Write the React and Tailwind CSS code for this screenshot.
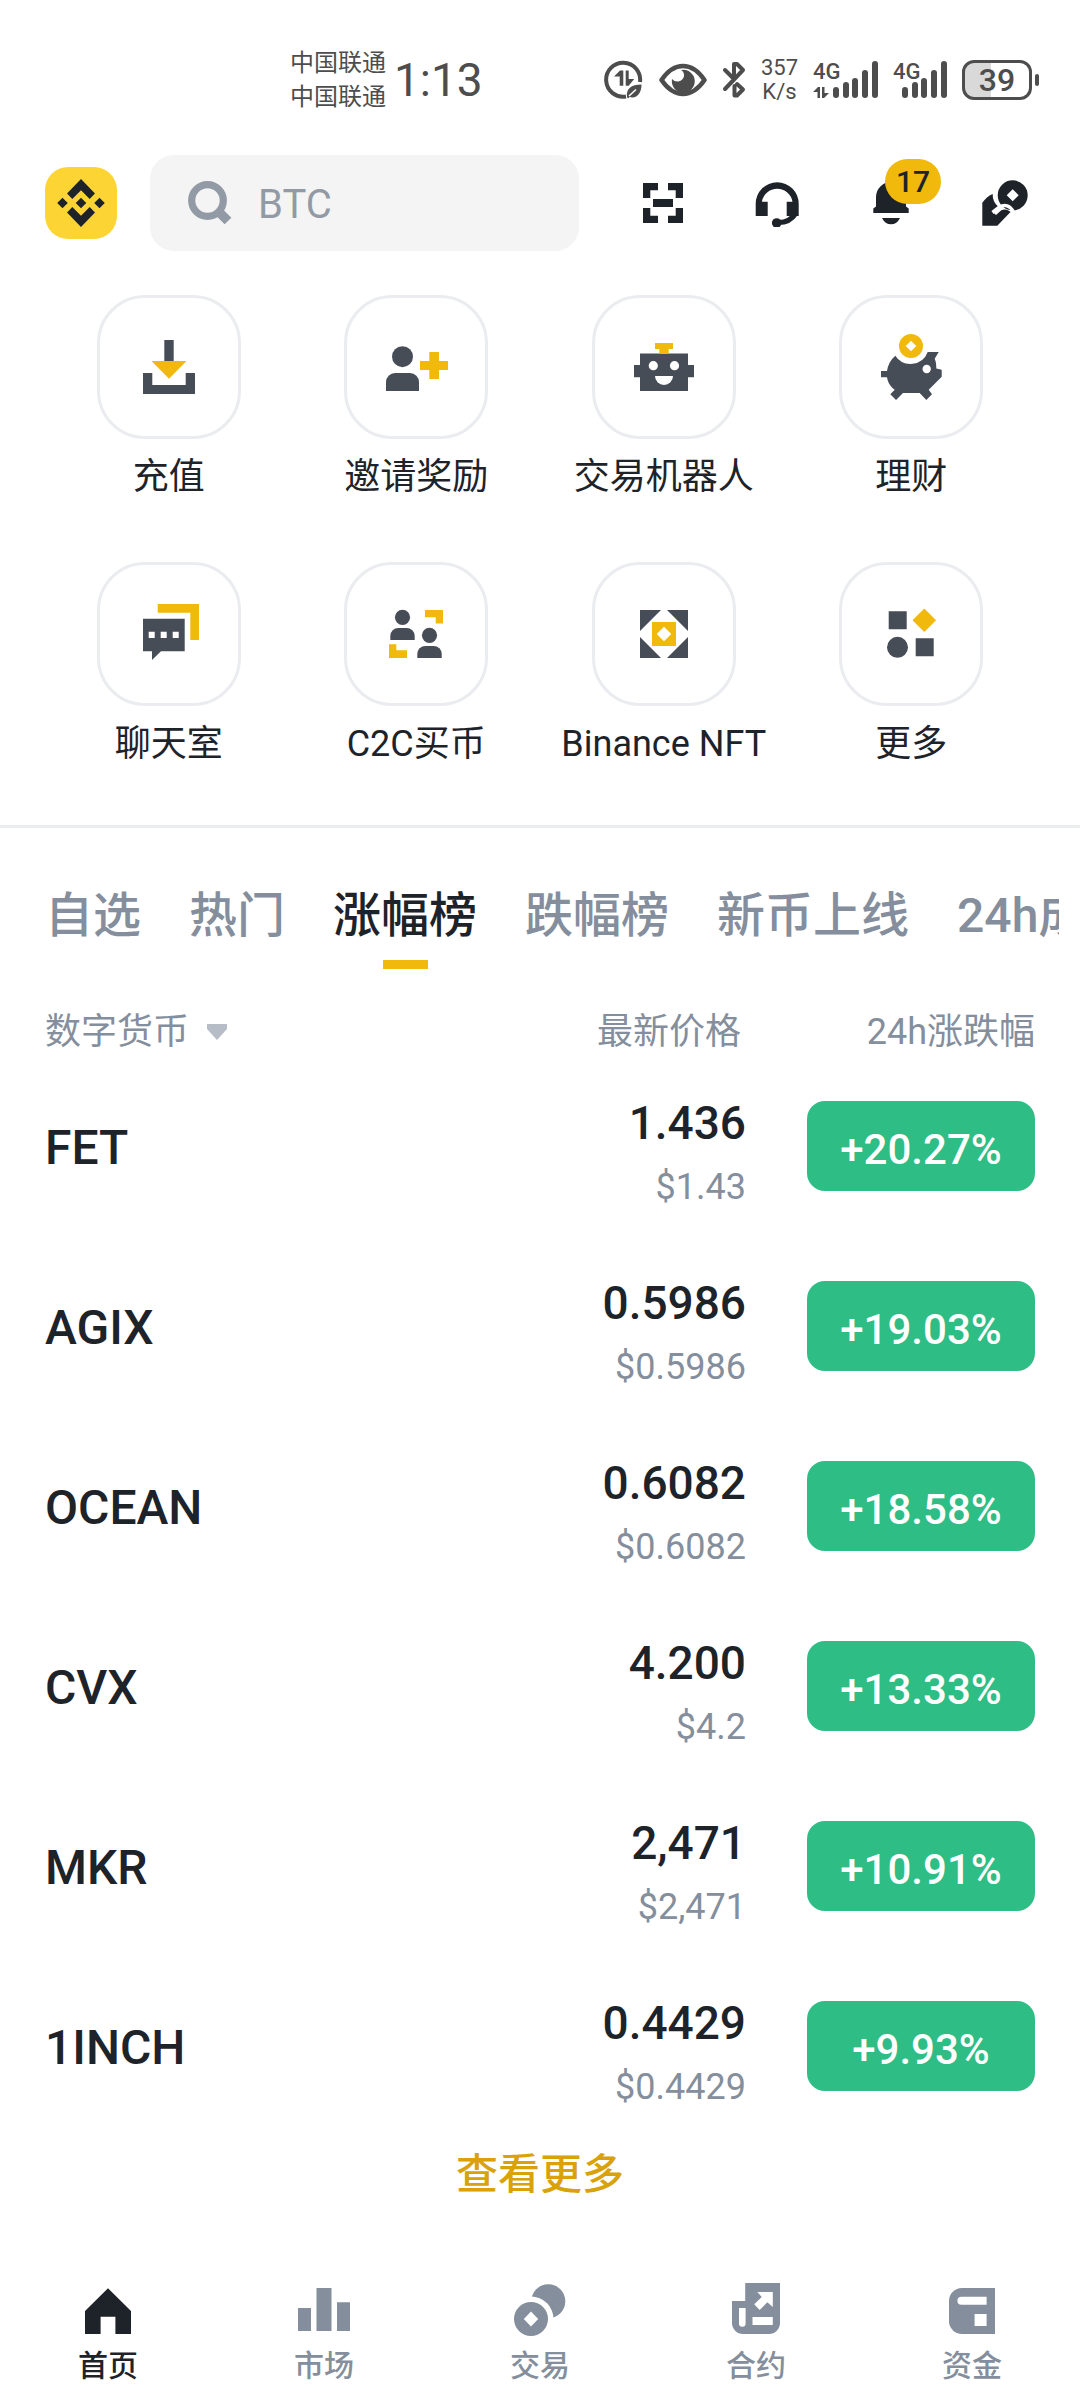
import React, { useState } from 'react';

const shortcuts = [
  {
    label: '充值',
    icon: (
      <>
        <path d="M31.3 9h9.4v22h-9.4z" fill="#474D57" />
        <path d="M10 42h9.3v12h33.4V42H62v21H10z" fill="#474D57" />
        <path d="M18.5 30h35L36 47.7z" fill="#F0B90B" />
      </>
    ),
  },
  {
    label: '邀请奖励',
    icon: (
      <>
        <circle cx="22.5" cy="25.7" r="10.5" fill="#474D57" />
        <path d="M6 60v-9a9 9 0 0 1 9-9h15a9 9 0 0 1 9 9v9z" fill="#474D57" />
        <path d="M49.3 21H59v9h9v9h-9v9h-9.700v-9H40v-9h9.300z" fill="#F0B90B" />
      </>
    ),
  },
  {
    label: '交易机器人',
    icon: (
      <>
        <path d="M12 22.5h48V34h6v12.3h-6V60H12V46.3H6V34h6z" fill="#474D57" />
        <path d="M27 12h18v6h-4.3v5h-9.4v-5H27z" fill="#F0B90B" />
        <circle cx="25.3" cy="34.7" r="4.6" fill="#fff" />
        <circle cx="46.5" cy="34.7" r="4.6" fill="#fff" />
        <path d="M27 45h18a9 9 0 0 1-18 0z" fill="#fff" />
      </>
    ),
  },
  {
    label: '理财',
    icon: (
      <>
        <path
          d="M20.3 24.7A18.3 18.3 0 0 0 52.7 21h11l-4 6.7c1.3 3 1.6 6 1.6 9.8l5.4 1.2v7l-13 13 3.3 4.6-5.7 5.7-6.6-7H28l-7 7-5.7-5.7 4.4-4.6C15 55.5 12.8 51 12 46.3H6V40h6c.8-6 3.5-11 8.300-15.300z"
          fill="#474D57"
        />
        <path
          d="M36 3a12 12 0 1 0 0 24 12 12 0 0 0 0-24zm0 6.7 5.3 5.3-5.3 5.3-5.3-5.3z"
          fill="#F0B90B"
          fillRule="evenodd"
        />
        <circle cx="51.7" cy="38" r="4.2" fill="#fff" />
      </>
    ),
  },
  {
    label: '聊天室',
    icon: (
      <>
        <path d="M24.7 6H66v36h-8.7V14.7H24.7z" fill="#F0B90B" />
        <path d="M10 20.7h41.7v32.6H28l-9 8.7v-8.700h-9z" fill="#474D57" />
        <path d="M15.7 33.7h6V40h-6zM27.7 33.7h6V40h-6zM39.7 33.7h6V40h-6z" fill="#fff" />
      </>
    ),
  },
  {
    label: 'C2C买币',
    icon: (
      <>
        <circle cx="22.5" cy="19.3" r="7.6" fill="#474D57" />
        <path d="M10.3 42v-4a8 8 0 0 1 8-8h8.4a8 8 0 0 1 8 8v4z" fill="#474D57" />
        <circle cx="49.5" cy="37.3" r="7.6" fill="#474D57" />
        <path d="M37.3 60v-4a8 8 0 0 1 8-8h8.4a8 8 0 0 1 8 8v4z" fill="#474D57" />
        <path d="M45 12h18v13.5h-7.3v-6.2H45zM9 46.3h7.3v6H27V60H9z" fill="#F0B90B" />
      </>
    ),
  },
  {
    label: 'Binance NFT',
    icon: (
      <>
        <path d="M12 12h21L12 33zM60 12v21L39 12zM60 60H39l21-21zM12 60V39l21 21z" fill="#474D57" />
        <path
          d="M24 24h24v24H24zm12 4.7L28.7 36l7.3 7.3 7.3-7.3z"
          fill="#F0B90B"
          fillRule="evenodd"
        />
      </>
    ),
  },
  {
    label: '更多',
    icon: (
      <>
        <path d="M13.7 13.3h18v18h-18zM40.7 40.3h18v18h-18z" fill="#474D57" />
        <circle cx="22.5" cy="49.3" r="10.5" fill="#474D57" />
        <path d="M49.3 10.5l11.8 11.8-11.8 11.8-11.8-11.8z" fill="#F0B90B" />
      </>
    ),
  },
];

const tabs = ['自选', '热门', '涨幅榜', '跌幅榜', '新币上线', '24h成交额'];

const coins = [
  { name: 'FET', price: '1.436', usd: '$1.43', change: '+20.27%' },
  { name: 'AGIX', price: '0.5986', usd: '$0.5986', change: '+19.03%' },
  { name: 'OCEAN', price: '0.6082', usd: '$0.6082', change: '+18.58%' },
  { name: 'CVX', price: '4.200', usd: '$4.2', change: '+13.33%' },
  { name: 'MKR', price: '2,471', usd: '$2,471', change: '+10.91%' },
  { name: '1INCH', price: '0.4429', usd: '$0.4429', change: '+9.93%' },
];

const navItems = [
  { label: '首页', icon: <path d="M30 8.300 53 31v23H37.400V36.700H22.600V54H7V31z" /> },
  { label: '市场', icon: <path d="M4 28h13v23H4zM22.500 8h15v43h-15zM43 22.300h13V51H43z" /> },
  {
    label: '交易',
    icon: (
      <>
        <circle cx="38.3" cy="21.3" r="17" />
        <circle cx="21" cy="39" r="22.5" fill="#fff" />
        <path
          d="M21 22a17 17 0 1 0 0 34 17 17 0 0 0 0-34zm0 9.500 7.200 7.500-7.200 7.500-7.200-7.500z"
          fillRule="evenodd"
        />
      </>
    ),
  },
  {
    label: '合约',
    icon: (
      <>
        <path d="M6 21h13.200V3H54v40a11 11 0 0 1-11 11H17A11 11 0 0 1 6 43z" />
        <path d="M13 28h6.600v15.500a3.300 3.300 0 0 1-6.600 0zM26.500 37h20.300v8H26.500z" fill="#fff" />
        <path d="M31.300 12h15.500v15l-5.500-4.700-7.600 7.700-5.500-5.700 7.600-7.300z" fill="#fff" />
      </>
    ),
  },
  {
    label: '资金',
    icon: (
      <>
        <path d="M53 8v46H20A13 13 0 0 1 7 41V21A13 13 0 0 1 20 8z" />
        <path d="M44.600 16.700v8H19.400a4 4 0 0 1 0-8zM32.600 34h12v12h-12z" fill="#fff" />
      </>
    ),
  },
];

const Signal = ({ data }) => (
  <svg
    className={data ? 'h-10 w-[65px] overflow-visible' : 'h-10 w-[54px] overflow-visible'}
    viewBox={data ? '0 0 65 40' : '11 0 54 40'}
    fill="#4D4D4D"
  >
    <text x={data ? 0 : 11} y="19" fontSize="22" fontWeight="500">4G</text>
    <rect x="20" y="27" width="6" height="11" rx="3" />
    <rect x="30" y="22" width="6" height="16" rx="3" />
    <rect x="39" y="18" width="6" height="20" rx="3" />
    <rect x="49" y="10" width="6" height="28" rx="3" />
    <rect x="59" y="1" width="6" height="37" rx="3" />
    {data && <path d="M0 32l5-5h2v11H4.500v-6zM9 27h2.500v6H16l-5 5H9z" />}
  </svg>
);

const StatusBar = () => (
  <div className="flex h-[155px] items-center pt-1 pl-[290px] pr-[41px] text-[#4D4D4D]">
    <div className="text-2xl leading-[34px]">
      <p>中国联通</p>
      <p>中国联通</p>
    </div>
    <span className="ml-2 text-[46px] leading-none">1:13</span>
    <div className="ml-auto flex items-center gap-[15px]">
      <svg className="h-10 w-10" viewBox="0 0 40 40" fill="#4D4D4D">
        <path d="M22 36.500A17 17 0 1 1 36 22" fill="none" stroke="#4D4D4D" strokeWidth="4" />
        <path d="M10 16.500l6-6h3.300v15.300h-3.600V16.500zM21.700 10.500h3V19h5.500l-5.500 6.800h-3z" />
        <path d="M23 37c-1-8 4-12.500 14.500-12.500C37.500 33 33 39 25.500 37l-1.500 1.500z" />
        <path d="M25 36l7-6.500" stroke="#fff" strokeWidth="1.500" />
      </svg>
      <svg className="h-10 w-12" viewBox="0 0 48 40">
        <path
          d="M2.500 20C9 10.500 16 6 24 6s15 4.500 21.500 14C39 29.500 32 34 24 34S9 29.500 2.500 20z"
          fill="none"
          stroke="#4D4D4D"
          strokeWidth="4.500"
          strokeLinejoin="round"
        />
        <path d="M22 10a11.500 11.500 0 1 1-9 9c4 4.500 11 2.500 12-3 .4-2.500-.8-5-3-6z" fill="#4D4D4D" />
      </svg>
      <svg className="h-10 w-6" viewBox="0 0 24 40" fill="none" stroke="#4D4D4D" strokeWidth="4" strokeLinecap="round" strokeLinejoin="round">
        <path d="M3 10l9 9V4h3l6 6-18 19M15 24l6 5.500-6 6h-2.500V26" />
      </svg>
      <div className="text-center text-[22px] leading-6">
        <p>357</p>
        <p>K/s</p>
      </div>
      <Signal data />
      <Signal />
      <div className="flex items-center gap-[3px]">
        <span className="flex h-10 w-[70px] items-center justify-center rounded-xl border-3 border-[#4D4D4D] bg-linear-to-r from-[#D9D9D9] from-40% to-white to-40% text-[32px] font-medium leading-none">
          39
        </span>
        <span className="h-3 w-1 rounded-full bg-[#4D4D4D]" />
      </div>
    </div>
  </div>
);

const Header = () => (
  <header className="flex items-center pl-[45px] pr-[51px]">
    <a href="#profile" aria-label="Binance" className="shrink-0">
      <svg className="size-[72px]" viewBox="0 0 72 72" fill="#1E2329">
        <rect width="72" height="72" rx="23" fill="#FCD535" />
        <path d="M36 12l14 14.500-5.300 5.500-8.700-8.700-8.700 8.700-5.300-5.500zM36 60l14-14.500-5.300-5.500-8.700 8.700-8.700-8.700-5.300 5.500z" />
        <path d="M36 30.700l5.300 5.300-5.300 5.300-5.300-5.300zM17.500 30.700l5.300 5.300-5.300 5.300-5.300-5.300zM54.500 30.700l5.300 5.300-5.300 5.300-5.300-5.300z" />
      </svg>
    </a>
    <label className="ml-[33px] flex h-24 min-w-0 flex-1 items-center gap-6 rounded-3xl bg-[#F4F4F4] px-9">
      <svg className="size-12 shrink-0" viewBox="0 0 48 48" fill="none" stroke="#929AA5">
        <circle cx="21.5" cy="21.5" r="15.8" strokeWidth="7.2" />
        <path d="M32 32l10 10" strokeWidth="9.5" />
      </svg>
      <input
        type="text"
        aria-label="BTC"
        placeholder="BTC"
        className="w-full min-w-0 bg-transparent pt-1 text-[40px] text-[#1E2329] outline-none placeholder:text-[#929AA5]"
      />
    </label>
    <div className="ml-[60px] flex gap-[66px]">
      <button type="button" aria-label="扫一扫">
        <svg className="size-12" viewBox="0 0 48 48" fill="#1E2329">
          <path d="M4 4h15v7.300h-7.700V19H4zM29 4h15v15h-7.300v-7.700H29zM4 29h7.300v7.700H19V44H4zM36.700 29H44v15H29v-7.300h7.700zM14 20h20v8H14z" />
        </svg>
      </button>
      <button type="button" aria-label="客服">
        <svg className="size-12" viewBox="0 0 48 48" fill="#1E2329">
          <path d="M2.700 37V24.800a21.500 21.500 0 0 1 43 0V37h-12V22.700h5.800a15.500 15.500 0 0 0-30.600 0h5.800V37z" />
          <path d="M23.700 43.500c7 .5 14-1.500 19-9" fill="none" stroke="#1E2329" strokeWidth="5" />
          <circle cx="23.7" cy="44" r="4.8" />
        </svg>
      </button>
      <button type="button" aria-label="通知" className="relative">
        <svg className="size-12" viewBox="0 0 48 48" fill="#1E2329">
          <path d="M9 27.500V18a15 15 0 0 1 30 0v9.500l2.700 2V34H6.300v-4.500zM15 39h18c-2 4.200-5 6.300-9 6.300S17 43.200 15 39z" />
        </svg>
        <span className="absolute -top-5 left-[18px] flex h-[45px] w-14 items-center justify-center rounded-full bg-[#F0B90B] text-[30px] font-medium leading-none text-[#1E2329]">
          17
        </span>
      </button>
      <button type="button" aria-label="支付">
        <svg className="size-12" viewBox="0 0 48 48" fill="#1E2329">
          <path
            d="M31.700 1.300a15 15 0 1 0 0 30 15 15 0 0 0 0-30zm0 9 6 6-6 6-6-6z"
            fillRule="evenodd"
          />
          <path d="M1.300 23.700c3-4 6-7 10.400-8.700-.2 5 1.600 9.500 5.600 12.700L11.300 32.500l3.700 3.500 5-4.500c3.500-2 7-1 9.500 1.500L16.300 46.700h-15z" />
          <path d="M11.500 33.500l7-5.500c5-3 10.500-1.500 13.500 4" fill="none" stroke="#fff" strokeWidth="3.5" />
        </svg>
      </button>
    </div>
  </header>
);

const Shortcuts = () => (
  <section className="grid grid-cols-4 gap-y-[61px] border-b-3 border-[#EAECEF] px-[45px] pt-11 pb-[57px]">
    {shortcuts.map((item) => (
      <a key={item.label} href="#shortcut" className="flex flex-col items-center gap-[14px]">
        <span className="flex size-36 items-center justify-center rounded-[48px] border-3 border-[#EAECEF]">
          <svg className="size-[72px]" viewBox="0 0 72 72">{item.icon}</svg>
        </span>
        <span className="whitespace-nowrap text-4xl leading-[48px]">{item.label}</span>
      </a>
    ))}
  </section>
);

const Markets = () => {
  const [active, setActive] = useState('涨幅榜');

  return (
    <section>
      <div className="mr-[21px] flex gap-12 overflow-hidden pl-[45px] pt-[52px]">
        {tabs.map((tab) => (
          <button
            key={tab}
            type="button"
            onClick={() => setActive(tab)}
            className={`flex shrink-0 flex-col items-center gap-2 text-5xl font-medium leading-[72px] ${active === tab ? 'text-[#1E2329]' : 'text-[#848E9C]'}`}
          >
            {tab}
            <span className={`h-[9px] w-[45px] ${active === tab ? 'bg-[#F0B90B]' : ''}`} />
          </button>
        ))}
      </div>
      <div className="px-[45px]">
        <table className="w-full">
          <thead>
            <tr className="h-[87px] align-bottom text-4xl leading-[48px] text-[#848E9C]">
              <th className="text-left font-normal">
                <button type="button" className="flex items-center gap-[18px]">
                  数字货币
                  <svg className="h-4 w-5" viewBox="0 0 20 16" fill="#B7BDC6">
                    <path d="M0 0h20v5L10 16 0 5z" />
                  </svg>
                </button>
              </th>
              <th className="pr-[5px] text-right font-normal">最新价格</th>
              <th className="w-[289px] text-right font-normal">24h涨跌幅</th>
            </tr>
          </thead>
          <tbody>
            {coins.map((coin) => (
              <tr key={coin.name} className="h-[180px]">
                <td className="pt-1 text-5xl font-medium">{coin.name}</td>
                <td className="pt-[18px] text-right">
                  <p className="text-[46px] font-medium leading-[64px]">{coin.price}</p>
                  <p className="text-4xl leading-[64px] text-[#848E9C]">{coin.usd}</p>
                </td>
                <td>
                  <button
                    type="button"
                    className="ml-auto flex h-[90px] w-[228px] items-center justify-center rounded-[18px] bg-[#2EBD85] pt-[6px] text-[42px] font-medium text-white"
                  >
                    {coin.change}
                  </button>
                </td>
              </tr>
            ))}
          </tbody>
        </table>
      </div>
      <a href="#more" className="block text-center text-[42px] font-medium leading-[78px] text-[#D9A20B]">
        查看更多
      </a>
    </section>
  );
};

const BottomNav = () => (
  <nav className="mt-auto grid grid-cols-5 pb-4">
    {navItems.map((item, index) => (
      <a
        key={item.label}
        href="#nav"
        className={`flex flex-col items-center gap-2 ${index === 0 ? 'text-[#1E2329]' : 'text-[#848E9C]'}`}
      >
        <svg className="size-[60px]" viewBox="0 0 60 60" fill="currentColor">{item.icon}</svg>
        <span className="text-[30px] font-medium leading-9">{item.label}</span>
      </a>
    ))}
  </nav>
);

const App = () => (
  <div
    lang="zh-CN"
    className="flex min-h-screen flex-col bg-white font-['Roboto','Noto_Sans_CJK_SC',sans-serif] text-[#1E2329]"
  >
    <StatusBar />
    <Header />
    <main>
      <Shortcuts />
      <Markets />
    </main>
    <BottomNav />
  </div>
);

export default App;
